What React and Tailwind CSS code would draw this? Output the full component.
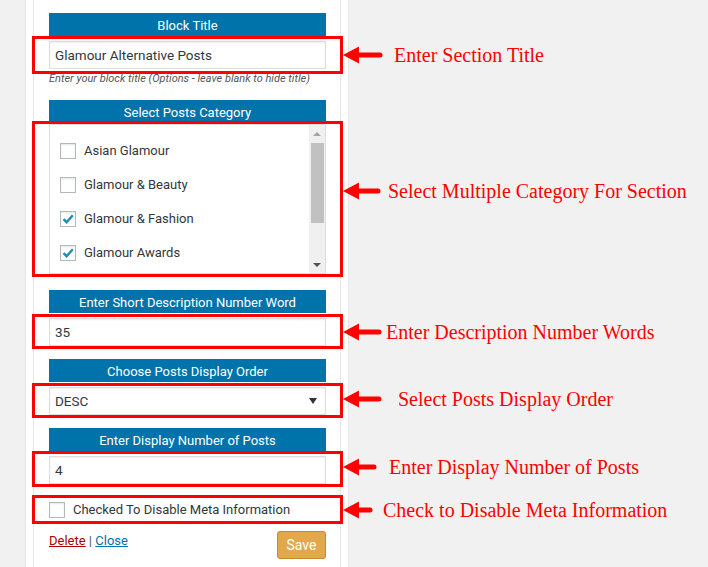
const HEAD = 'flex h-[23px] items-center justify-center bg-[#0073aa] pt-[2px] text-[13px] text-white';
const FIELD = 'flex h-[28px] items-center border border-[#ddd] bg-white px-[5px] text-[13.5px] text-[#32373c] shadow-[inset_0_1px_2px_rgba(0,0,0,0.07)]';

function Arrow({ len }) {
	return (
		<svg width={len} height="18" viewBox={`0 0 ${len} 18`} className="shrink-0">
			<polygon points="0,9 16,0.5 16,17.5" fill="#ff0000" />
			<line x1="14" y1="9" x2={len - 3} y2="9" stroke="#ff0000" strokeWidth="5" strokeLinecap="round" />
		</svg>
	);
}

function Note({ text, len, className }) {
	return (
		<div className={`absolute left-[calc(100%+17px)] flex items-center whitespace-nowrap ${className}`}>
			<Arrow len={len} />
			<span className="text-[20px] leading-none text-[#ff0000]" style={{ fontFamily: '"Liberation Serif", serif' }}>
				{text}
			</span>
		</div>
	);
}

function RedBox({ className }) {
	return <div className={`pointer-events-none absolute -inset-x-[17px] z-10 border-[3px] border-[#ff0000] ${className}`} />;
}

function Check({ checked }) {
	return (
		<span className="flex h-[16px] w-[16px] shrink-0 items-center justify-center border border-[#b4b9be] bg-white shadow-[inset_0_1px_2px_rgba(0,0,0,0.1)]">
			{checked && (
				<svg width="14" height="14" viewBox="0 0 14 14">
					<path d="M2.5 7.2 L5.6 10.2 L11.8 3.2" fill="none" stroke="#1e8cbe" strokeWidth="2.4" />
				</svg>
			)}
		</span>
	);
}

const CATS = [
	{ name: 'Asian Glamour', on: false },
	{ name: 'Glamour & Beauty', on: false },
	{ name: 'Glamour & Fashion', on: true },
	{ name: 'Glamour Awards', on: true },
];

export default function App() {
	return (
		<div className="flex h-[567px] w-[708px] overflow-hidden bg-[#f1f1f1]" style={{ fontFamily: 'Roboto, "Open Sans", sans-serif' }}>
			<div className="ml-[25px] w-[324px] border-x border-[#e5e5e5] bg-white">
				<div className="mx-[7px] h-full border-x border-[#e5e5e5] pl-[15px] pr-[14px] pt-[13px]">
					<div className={HEAD}>Block Title</div>
					<div className="relative mt-[5px]">
						<RedBox className="-top-[5px] -bottom-[5px]" />
						<div className={FIELD}>Glamour Alternative Posts</div>
						<Note text="Enter Section Title" len={40} className="top-[4px] [&>span]:ml-[11px]" />
					</div>
					<p className="mt-[3px] h-[14px] text-[11px] leading-[14px] italic text-[#555]">
						Enter your block title (Options - leave blank to hide title)
					</p>

					<div className={`${HEAD} mt-[14px]`}>Select Posts Category</div>
					<div className="relative mt-[1px]">
						<RedBox className="-top-[3px] -bottom-[3px]" />
						<div className="flex h-[150px] border border-[#ddd] bg-white">
							<div className="flex flex-1 flex-col gap-[18px] pl-[10px] pt-[18px]">
								{CATS.map((c) => (
									<label key={c.name} className="flex h-[16px] items-center gap-[8px] text-[13px] text-[#32373c]">
										<Check checked={c.on} />
										{c.name}
									</label>
								))}
							</div>
							<div className="flex w-[16px] flex-col items-center bg-[#f0f0f0]">
								<div className="flex h-[18px] items-center">
									<div className="h-0 w-0 border-x-[4px] border-b-[4px] border-x-transparent border-b-[#a3a3a3]" />
								</div>
								<div className="h-[80px] w-[13px] bg-[#c1c1c1]" />
								<div className="flex-1" />
								<div className="flex h-[16px] items-center">
									<div className="h-0 w-0 border-x-[4px] border-t-[4px] border-x-transparent border-t-[#505050]" />
								</div>
							</div>
						</div>
						<Note text="Select Multiple Category For Section" len={38} className="top-[57px] [&>span]:ml-[7px]" />
					</div>

					<div className={`${HEAD} mt-[16px]`}>Enter Short Description Number Word</div>
					<div className="relative mt-[5px]">
						<RedBox className="-top-[4px] -bottom-[3px]" />
						<div className={FIELD}>35</div>
						<Note text="Enter Description Number Words" len={39} className="top-[4px] [&>span]:ml-[4px]" />
					</div>

					<div className={`${HEAD} mt-[13px]`}>Choose Posts Display Order</div>
					<div className="relative mt-[5px]">
						<RedBox className="-top-[4px] -bottom-[3px]" />
						<div className={`${FIELD} justify-between pr-[8px]`}>
							<span>DESC</span>
							<div className="h-0 w-0 border-x-[4px] border-t-[6px] border-x-transparent border-t-[#333]" />
						</div>
						<Note text="Select Posts Display Order" len={39} className="top-[2px] [&>span]:ml-[16px]" />
					</div>

					<div className={`${HEAD} mt-[13px]`}>Enter Display Number of Posts</div>
					<div className="relative mt-[5px]">
						<RedBox className="-top-[5px] -bottom-[3px]" />
						<div className={FIELD}>4</div>
						<Note text="Enter Display Number of Posts" len={34} className="top-[1px] [&>span]:ml-[12px]" />
					</div>

					<div className="relative mt-[14px] flex h-[23px] items-center gap-[8px] text-[13px] text-[#32373c]">
						<RedBox className="-top-[3px] -bottom-[3px]" />
						<Check checked={false} />
						Checked To Disable Meta Information
						<Note text="Check to Disable Meta Information" len={30} className="top-[2px] [&>span]:ml-[10px]" />
					</div>

					<div className="mt-[10px] flex items-start justify-between">
						<div className="text-[13px] leading-[20px] text-[#555]">
							<a className="text-[#a00] underline">Delete</a> | <a className="text-[#0073aa] underline">Close</a>
						</div>
						<button className="flex h-[28px] w-[49px] items-center justify-center rounded-[3px] border border-[#c48a2d] bg-[#e2a84b] text-[14px] text-white">
							Save
						</button>
					</div>
				</div>
			</div>
		</div>
	);
}
